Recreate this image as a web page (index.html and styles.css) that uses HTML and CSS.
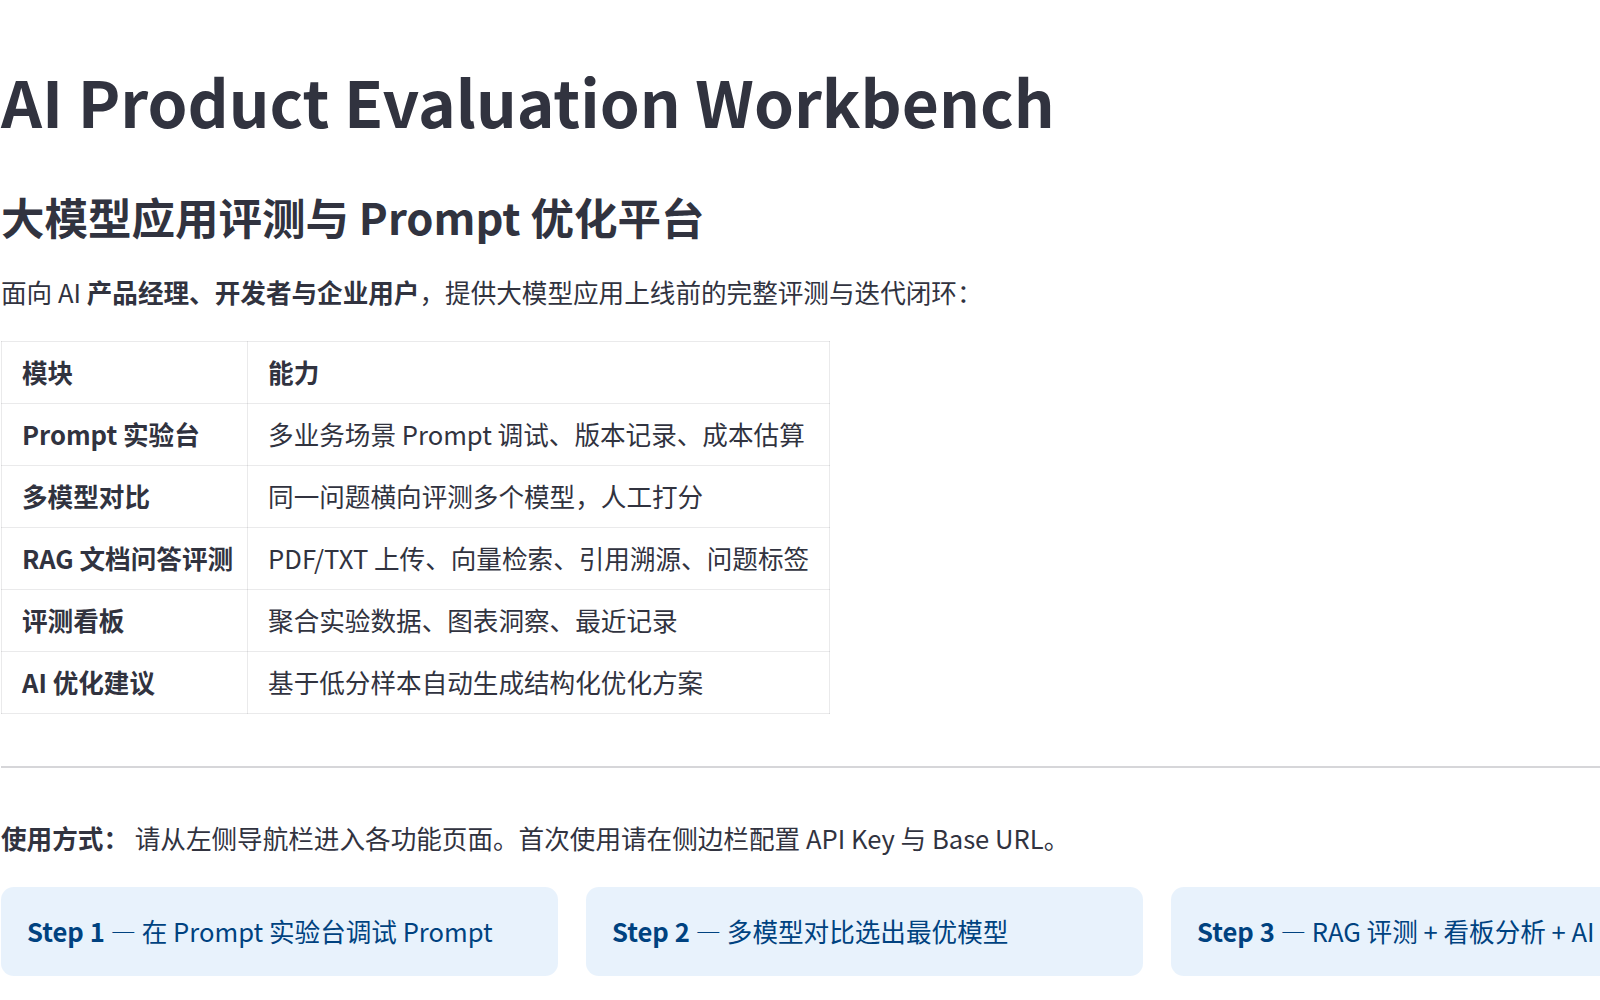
FILE: index.html
```html
<!DOCTYPE html>
<html lang="zh-CN">
<head>
<meta charset="utf-8">
<title>AI Product Evaluation Workbench</title>
<link rel="stylesheet" href="styles.css">
</head>
<body>
<main class="main">
  <h1 class="title">AI Product Evaluation Workbench</h1>
  <h3 class="subtitle">大模型应用评测与 Prompt 优化平台</h3>
  <p class="intro">面向 AI <strong>产品经理、开发者与企业用户</strong>，提供大模型应用上线前的完整评测与迭代闭环：</p>
  <table class="modules">
    <thead>
      <tr><th class="c1">模块</th><th class="c2">能力</th></tr>
    </thead>
    <tbody>
      <tr><td class="c1"><strong>Prompt 实验台</strong></td><td>多业务场景 Prompt 调试、版本记录、成本估算</td></tr>
      <tr><td class="c1"><strong>多模型对比</strong></td><td>同一问题横向评测多个模型，人工打分</td></tr>
      <tr><td class="c1"><strong>RAG 文档问答评测</strong></td><td>PDF/TXT 上传、向量检索、引用溯源、问题标签</td></tr>
      <tr><td class="c1"><strong>评测看板</strong></td><td>聚合实验数据、图表洞察、最近记录</td></tr>
      <tr><td class="c1"><strong>AI 优化建议</strong></td><td>基于低分样本自动生成结构化优化方案</td></tr>
    </tbody>
  </table>
  <hr class="rule">
  <p class="usage"><strong>使用方式：</strong> 请从左侧导航栏进入各功能页面。首次使用请在侧边栏配置 API Key 与 Base URL。</p>
  <div class="steps">
    <div class="step"><strong>Step 1</strong> — 在 Prompt 实验台调试 Prompt</div>
    <div class="step"><strong>Step 2</strong> — 多模型对比选出最优模型</div>
    <div class="step"><strong>Step 3</strong> — RAG 评测 + 看板分析 + AI 优化迭代</div>
  </div>
</main>
</body>
</html>
```

FILE: styles.css
```css
html, body {
  margin: 0;
  padding: 0;
  background: #ffffff;
  overflow: hidden;
}

body {
  font-family: "Noto Sans CJK SC", "Noto Sans", sans-serif;
  color: #31333f;
  font-size: 25.6px;
  line-height: 1.6;
}

.main {
  padding-left: 1px;
  padding-top: 62px;
  width: 1740px;
}

.title {
  margin: 0;
  font-size: 64px;
  font-weight: 700;
  line-height: 1.2;
  letter-spacing: 0;
}

.subtitle {
  margin: 52px 0 0 0;
  font-size: 43.5px;
  font-weight: 700;
  line-height: 1.2;
}

.intro {
  margin: 29px 0 0 0;
}

.intro strong,
.usage strong,
.modules strong {
  font-weight: 700;
}

.modules {
  margin-top: 28px;
  border-collapse: collapse;
  border: 1px solid rgba(49, 51, 63, 0.1);
}

.modules th,
.modules td {
  border: 1px solid rgba(49, 51, 63, 0.1);
  padding: 10px 20px;
  text-align: left;
  vertical-align: middle;
  height: 41px;
}

.modules th {
  font-weight: 700;
}

.modules .c1 {
  white-space: nowrap;
  padding-right: 14px;
}

.rule {
  margin: 52px 0 0 0;
  border: none;
  border-top: 2px solid rgba(49, 51, 63, 0.2);
  height: 0;
}

.usage {
  margin: 50px 0 0 0;
}

.steps {
  margin-top: 28px;
  display: grid;
  grid-template-columns: 557px 557px 557px;
  column-gap: 28px;
}

.step {
  background: rgba(28, 131, 225, 0.1);
  color: #004280;
  border-radius: 12.8px;
  padding: 24px 26px;
  white-space: nowrap;
  overflow: hidden;
}

.step strong {
  font-weight: 700;
}
```
